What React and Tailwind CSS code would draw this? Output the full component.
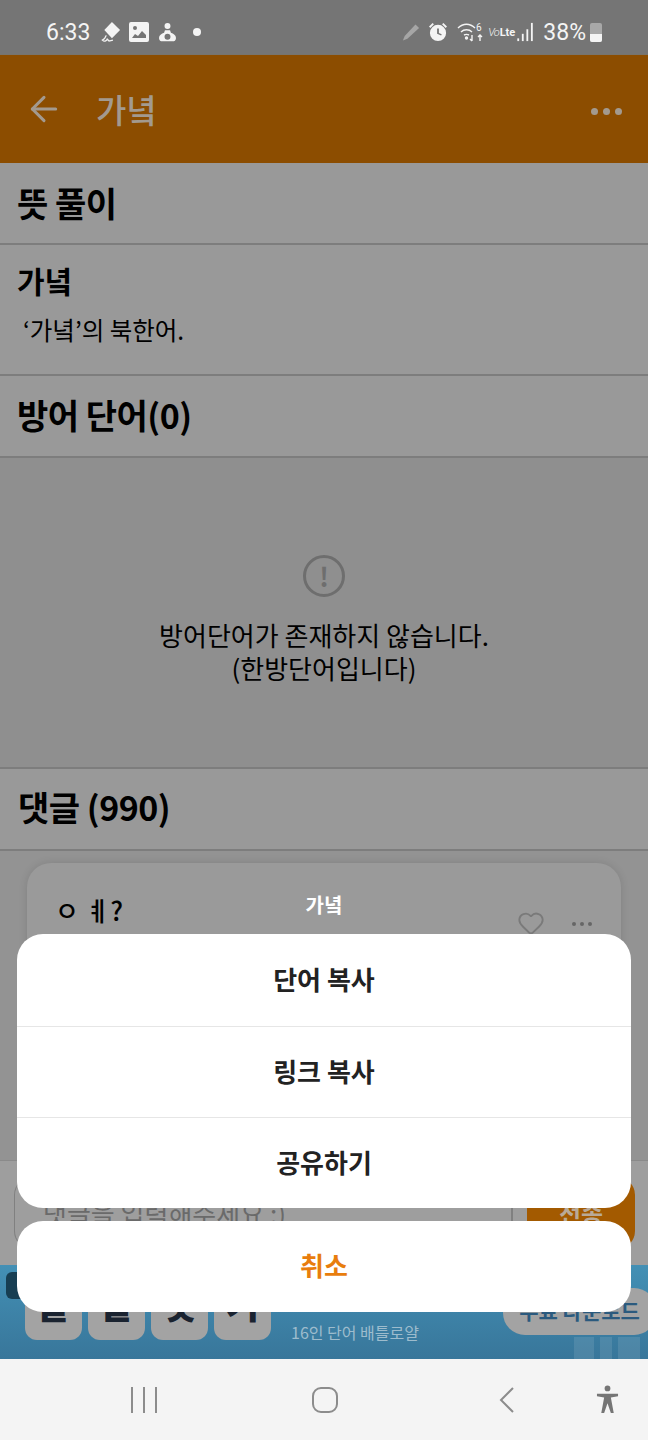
import { ArrowLeft, Heart } from 'lucide-react'

const FONT = 'font-["Noto_Sans_CJK_KR","Noto_Sans",sans-serif]'

const SHEET_ITEMS = ['단어 복사', '링크 복사', '공유하기']
const AD_TILES = ['끝', '말', '잇', '기']

function StatusBar() {
  return (
    <div className="h-[55px] bg-[#757575] flex items-center justify-between pt-[10px] pl-[46px] pr-[46px] text-[#f4f4f4] border-b border-[#78746c]">
      <div className="flex items-center">
        <span className="text-[23px] font-['Roboto'] leading-none w-[55px]">6:33</span>
        <svg viewBox="0 0 20 22" className="w-[20px] h-[21px]" fill="currentColor">
          <path d="M11 0l8.500 8.500L11 17 3 8.500z" />
          <path d="M5 14c-1 3-2 4-4 5 2 2 4 1 5-1l2 2 4-1" fill="none" stroke="currentColor" strokeWidth="1.400" />
        </svg>
        <svg viewBox="0 0 20 20" className="w-[20px] h-[20px] ml-[8px]" fill="currentColor">
          <path fillRule="evenodd" d="M2 0h16a2 2 0 012 2v16a2 2 0 01-2 2H2a2 2 0 01-2-2V2a2 2 0 012-2zm1 16h14v-3l-4-4-4 5-3-2zM6 4a2 2 0 100 4 2 2 0 000-4z" />
        </svg>
        <svg viewBox="0 0 20 22" className="w-[17px] h-[20px] ml-[10px]" fill="currentColor">
          <circle cx="10" cy="4" r="3.500" />
          <path fillRule="evenodd" d="M7 9h6l1 3c3 1 6 3 6 6 0 3-2 4-4 4H4c-2 0-4-1-4-4 0-3 3-5 6-6zM10 13a3.500 3.500 0 100 7 3.500 3.500 0 000-7z" />
        </svg>
        <span className="w-[8px] h-[8px] rounded-full bg-[#f4f4f4] ml-[17px]" />
      </div>
      <div className="flex items-center">
        <svg viewBox="0 0 20 20" className="w-[18px] h-[19px] text-[#a6a6a6]" fill="currentColor">
          <path d="M15 1l4 4L6 17l-5 2 2-5z" />
        </svg>
        <svg viewBox="0 0 20 22" className="w-[18px] h-[20px] ml-[9px]" fill="currentColor">
          <path fillRule="evenodd" d="M10 3a9 9 0 110 18 9 9 0 010-18zM9 7v6l4.500 2 .6-1.500L11 12.200V7z" />
          <path d="M0 5l4-4 1.500 1.500-4 4zM20 5l-4-4-1.500 1.500 4 4z" />
        </svg>
        <svg viewBox="0 0 26 20" className="w-[26px] h-[20px] ml-[10px]" fill="none" stroke="currentColor" strokeWidth="1.400">
          <path d="M1 6c5-5 12-5 17 0M4 10c3-3 8-3 11 0M7 13c2-1 3-1 5 0" />
          <circle cx="9.500" cy="16" r="1" fill="currentColor" />
          <path d="M15 13v6m-2-2l2 2M23 19v-6m-2 2l2-2l2 2" />
          <text x="19" y="9" fontSize="10" fill="currentColor" stroke="none" fontFamily="Roboto">6</text>
        </svg>
        <span className="w-[25px] ml-[5px] text-[11px] leading-none font-['Roboto'] whitespace-nowrap">
          <span className="italic font-light tracking-[-1px]">Vo</span>
          <span className="font-bold ml-[1px]">Lte</span>
        </span>
        <svg viewBox="0 0 18 22" className="w-[17px] h-[20px] ml-[4px]" fill="currentColor">
          <rect x="0" y="18" width="2" height="3" />
          <rect x="5" y="13" width="2" height="8" />
          <rect x="10" y="8" width="2" height="13" />
          <rect x="15" y="1" width="2" height="20" />
        </svg>
        <span className="text-[23px] font-['Roboto'] leading-none ml-[9px]">38%</span>
        <div className="w-[12px] h-[19px] ml-[4px] rounded-[2px] bg-[#a8a8a8] flex flex-col justify-end overflow-hidden">
          <div className="h-[8px] bg-[#f4f4f4]" />
        </div>
      </div>
    </div>
  )
}

function AppBar() {
  return (
    <div className="h-[108px] bg-[#8c4d00] flex items-center pl-[24px] pr-[26px] text-[#a39a8f]">
      <ArrowLeft className="w-[40px] h-[40px]" strokeWidth={1.8} />
      <span className="text-[33px] font-medium ml-[32px] leading-none">가녘</span>
      <div className="ml-auto mt-[5px] flex gap-[5px]">
        <span className="w-[7px] h-[7px] rounded-full bg-current" />
        <span className="w-[7px] h-[7px] rounded-full bg-current" />
        <span className="w-[7px] h-[7px] rounded-full bg-current" />
      </div>
    </div>
  )
}

function SectionTitle({ children, className = '' }) {
  return (
    <div className={`flex items-center border-b-2 border-[#7d7d7d] ${className}`}>
      <h2 className="text-[34px] font-bold text-black leading-none tracking-[-0.5px]">{children}</h2>
    </div>
  )
}

function Comment() {
  return (
    <div className="mx-[27px] mt-[12px] h-[320px] rounded-[24px] bg-[#9a9a9a] shadow-[0_0_8px_rgba(0,0,0,0.12)] pl-[28px] pr-[29px] pt-[34px]">
      <div className="flex items-start">
        <span className="text-[26px] font-medium text-black leading-none tracking-[0.5px]">ㅇ ㅖ?</span>
        <div className="ml-auto mt-[12px] flex items-center text-[#7a7a7a]">
          <Heart className="w-[28px] h-[28px]" strokeWidth={1.6} />
          <div className="flex gap-[4px] ml-[27px] mt-[2px]">
            <span className="w-[4px] h-[4px] rounded-full bg-[#666]" />
            <span className="w-[4px] h-[4px] rounded-full bg-[#666]" />
            <span className="w-[4px] h-[4px] rounded-full bg-[#666]" />
          </div>
        </div>
      </div>
    </div>
  )
}

function CommentInput() {
  return (
    <div className="h-[105px] border-t border-[#8a8a8a] bg-[#9e9e9e] flex items-center px-[14px]">
      <div className="flex-1 h-[72px] flex items-center border border-[#808080] border-r-0 rounded-l-[18px] pl-[28px]">
        <span className="text-[26px] text-[#6a6a6a] leading-none">댓글을 입력해주세요 :)</span>
      </div>
      <div className="w-[2px] h-[72px] bg-[#808080]" />
      <div className="w-[108px] h-[72px] ml-[14px] mr-[-1px] rounded-r-[18px] bg-[#a35a00] flex items-center justify-center">
        <span className="text-[24px] font-bold text-[#b9aa98] leading-none">전송</span>
      </div>
    </div>
  )
}

function AdBanner() {
  return (
    <div className="relative h-[94px] bg-linear-to-b from-[#4390b5] to-[#38769a] flex items-end overflow-hidden">
      <div className="absolute left-[6px] top-[7px] w-[28px] h-[27px] rounded-[6px] bg-[#173e52]" />
      <div className="flex gap-[6px] pl-[25px] pb-[19px]">
        {AD_TILES.map(t => (
          <div key={t} className="w-[57px] h-[57px] pb-[18px] rounded-[12px] bg-[#a3a3a3] flex items-center justify-center text-[36px] font-black text-[#1a2330] leading-none">
            {t}
          </div>
        ))}
      </div>
      <span className="ml-[20px] pb-[19px] text-[16px] text-[#9dbccd] leading-none">16인 단어 배틀로얄</span>
      <div className="absolute right-[-8px] top-[23px] w-[153px] h-[47px] rounded-[22px] bg-[#a3a3a3] flex items-center justify-center text-[21px] font-bold text-[#2b5a7e] leading-none pb-[2px]">
        무료 다운로드
      </div>
      <div className="absolute right-[8px] bottom-0 flex gap-[6px] opacity-20">
        <div className="w-[20px] h-[22px] bg-[#9dbccd]" />
        <div className="w-[12px] h-[22px] bg-[#9dbccd]" />
        <div className="w-[22px] h-[22px] bg-[#9dbccd]" />
      </div>
    </div>
  )
}

function NavBar() {
  return (
    <div className="h-[81px] bg-[#f4f4f4] flex items-center text-[#8c8c8c]">
      <div className="flex gap-[10px] ml-[131px]">
        <span className="w-[2px] h-[26px] bg-current" />
        <span className="w-[2px] h-[26px] bg-current" />
        <span className="w-[2px] h-[26px] bg-current" />
      </div>
      <div className="w-[26px] h-[26px] ml-[155px] rounded-[9px] border-2 border-current" />
      <svg viewBox="0 0 16 28" className="w-[16px] h-[28px] ml-[161px]" fill="none" stroke="currentColor" strokeWidth="2">
        <path d="M14 2L2 14l12 12" />
      </svg>
      <svg viewBox="0 0 24 30" className="w-[23px] h-[29px] ml-[81px] text-[#757575]" fill="currentColor">
        <circle cx="12" cy="3.500" r="3" />
        <path d="M1 9h22v2.500l-7.500 1.500 3 16h-3l-3.500-10-3.500 10h-3l3-16L1 11.500z" />
      </svg>
    </div>
  )
}

function ActionSheet() {
  return (
    <div className="absolute left-[17px] right-[17px] top-[895px]">
      <p className="text-center text-[20px] font-bold text-white leading-none h-[39px]">가녘</p>
      <div className="bg-white rounded-[26px] overflow-hidden">
        {SHEET_ITEMS.map((label, i) => (
          <div key={label} className={`flex items-center justify-center pb-[3px] text-[26px] font-bold text-[#222] leading-none ${i > 0 ? 'h-[91px] border-t border-[#e6e6e6]' : 'h-[92px]'}`}>
            {label}
          </div>
        ))}
      </div>
      <div className="mt-[13px] h-[91px] pb-[3px] bg-white rounded-[26px] flex items-center justify-center text-[26px] font-bold text-[#e87d0d] leading-none">
        취소
      </div>
    </div>
  )
}

export default function App() {
  return (
    <div className={`relative w-[648px] h-[1440px] overflow-hidden bg-[#999999] ${FONT}`}>
      <StatusBar />
      <AppBar />
      <SectionTitle className="h-[82px] px-[17px]">뜻 풀이</SectionTitle>

      <div className="h-[131px] px-[17px] pt-[20px] border-b-2 border-[#7d7d7d]">
        <h3 className="text-[30px] font-bold text-black leading-none">가녘</h3>
        <p className="text-[24.5px] text-black leading-none mt-[23px] ml-[6px]">‘가녘’의 북한어.</p>
      </div>

      <SectionTitle className="h-[82px] px-[17px] pb-[2px]">방어 단어(0)</SectionTitle>

      <div className="h-[311px] flex flex-col items-center pt-[97px] border-b-2 border-[#7d7d7d] bg-[#8f8f8f]">
        <div className="w-[42px] h-[42px] rounded-full border-[3.5px] border-[#6e6e6e] flex items-center justify-center text-[26px] font-bold text-[#6e6e6e] leading-none">!</div>
        <p className="text-[26px] text-black text-center leading-[33px] mt-[21px]">
          방어단어가 존재하지 않습니다.<br />(한방단어입니다)
        </p>
      </div>

      <SectionTitle className="h-[82px] px-[18px] pb-[4px]">댓글 (990)</SectionTitle>

      <div className="h-[309px] overflow-hidden bg-[#939393]">
        <Comment />
      </div>
      <CommentInput />
      <AdBanner />
      <NavBar />
      <ActionSheet />
    </div>
  )
}
